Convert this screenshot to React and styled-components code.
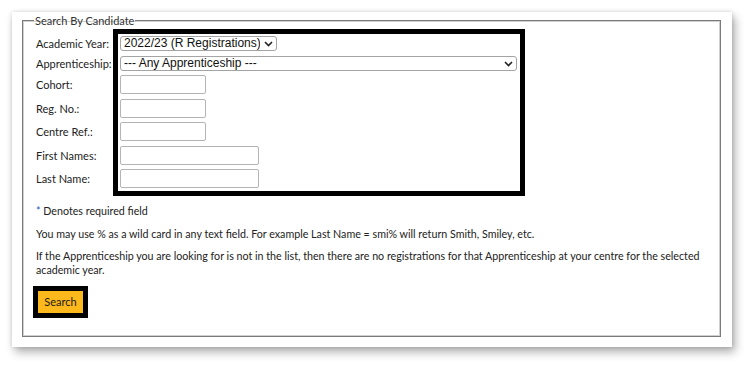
import React from 'react';
import styled, { createGlobalStyle } from 'styled-components';

const GlobalStyle = createGlobalStyle`
  body {
    margin: 0;
    background: #ffffff;
    font-family: Lato, "Open Sans", sans-serif;
  }
`;

const Chevron = () => (
  <ChevronIcon width="9" height="6" viewBox="0 0 9 6">
    <polyline points="1,1 4.5,4.5 8,1" fill="none" stroke="#222" strokeWidth="1.6" />
  </ChevronIcon>
);

const DropDown = ({ width, children }) => (
  <SelectWrap $w={width}>
    <Select>{children}</Select>
    <Chevron />
  </SelectWrap>
);

const SearchByCandidate = () => {
  return (
    <Page>
      <GlobalStyle />
      <Card>
        <Fieldset>
          <Legend>Search By Candidate</Legend>
          <FormRow>
            <LabelColumn>
              <Label $h={15}>Academic Year:</Label>
              <Label $h={15}>Apprenticeship:</Label>
              <Label $h={19}>Cohort:</Label>
              <Label $h={19}>Reg. No.:</Label>
              <Label $h={19}>Centre Ref.:</Label>
              <Label $h={19}>First Names:</Label>
              <Label $h={19}>Last Name:</Label>
            </LabelColumn>
            <FocusBox>
              <DropDown width={157}>
                <option>2022/23 (R Registrations)</option>
              </DropDown>
              <DropDown width={397}>
                <option>--- Any Apprenticeship ---</option>
              </DropDown>
              <TextInput $w={86} />
              <TextInput $w={86} />
              <TextInput $w={86} />
              <TextInput $w={139} />
              <TextInput $w={139} />
            </FocusBox>
          </FormRow>
          <Note>
            <Star>*</Star> Denotes required field
          </Note>
          <Note>
            You may use % as a wild card in any text field. For example Last Name = smi% will return Smith, Smiley, etc.
          </Note>
          <Note>
            If the Apprenticeship you are looking for is not in the list, then there are no registrations for that
            Apprenticeship at your centre for the selected academic year.
          </Note>
          <ButtonFrame>
            <SearchButton>Search</SearchButton>
          </ButtonFrame>
        </Fieldset>
      </Card>
    </Page>
  );
};

const Page = styled.div`
  padding: 12px 18px 19px 12px;
`;

const Card = styled.div`
  box-sizing: border-box;
  width: 720px;
  padding: 2px 11px 10px 10px;
  background: #fff;
  box-shadow: 3px 5px 9px rgba(0, 0, 0, 0.32), 0 0 4px rgba(0, 0, 0, 0.14);
`;

const Fieldset = styled.fieldset`
  box-sizing: border-box;
  margin: 0;
  height: 323px;
  padding: 2px 13px 18px 13px;
  border: 1px solid #7a7a7a;
  box-shadow: inset 0 0 0 1px #d0d0d0;
  min-width: 0;
`;

const Legend = styled.legend`
  padding: 0 1px;
  margin-left: -2px;
  font-size: 11px;
  color: #333;
  line-height: 13px;
`;

const FormRow = styled.div`
  display: flex;
  align-items: flex-start;
`;

const LabelColumn = styled.div`
  display: flex;
  flex-direction: column;
  gap: 4.5px;
  width: 77px;
  padding-top: 7px;
`;

const Label = styled.label`
  height: ${p => p.$h}px;
  display: flex;
  align-items: center;
  font-size: 11px;
  color: #222;
  white-space: nowrap;
`;

const FocusBox = styled.div`
  display: flex;
  flex-direction: column;
  align-items: flex-start;
  gap: 4.5px;
  width: 397px;
  padding: 2px 3px 3px 2px;
  border: 5px solid #000;
  background: #fff;
`;

const SelectWrap = styled.div`
  position: relative;
  display: flex;
  width: ${p => p.$w}px;
  height: 15px;
`;

const Select = styled.select`
  appearance: none;
  box-sizing: border-box;
  width: 100%;
  height: 15px;
  margin: 0;
  padding: 0 16px 0 3px;
  font-family: "Liberation Sans", Arial, sans-serif;
  font-size: 12px;
  line-height: 13px;
  color: #111;
  background: #fff;
  border: 1px solid #a4a4a4;
  border-radius: 3px;
`;

const ChevronIcon = styled.svg`
  position: absolute;
  right: 4px;
  top: 5px;
  pointer-events: none;
`;

const TextInput = styled.input`
  box-sizing: border-box;
  width: ${p => p.$w}px;
  height: 19px;
  padding: 0 3px;
  border: 1px solid #b4b4b4;
  border-radius: 2px;
  background: #fff;
`;

const Note = styled.p`
  margin: 0 0 8.5px;
  font-size: 10.7px;
  line-height: 14px;
  color: #222;
  &:first-of-type {
    margin-top: 8px;
  }
`;

const Star = styled.span`
  color: #1f57b5;
`;

const ButtonFrame = styled.div`
  display: flex;
  width: fit-content;
  margin-top: 3px;
  margin-left: -3px;
  border: 5px solid #000;
`;

const SearchButton = styled.button`
  width: 45px;
  height: 22px;
  padding: 0;
  border: none;
  background: #fdb81c;
  color: #1a1a1a;
  font-family: Lato, "Open Sans", sans-serif;
  font-size: 11px;
`;

export default SearchByCandidate;
